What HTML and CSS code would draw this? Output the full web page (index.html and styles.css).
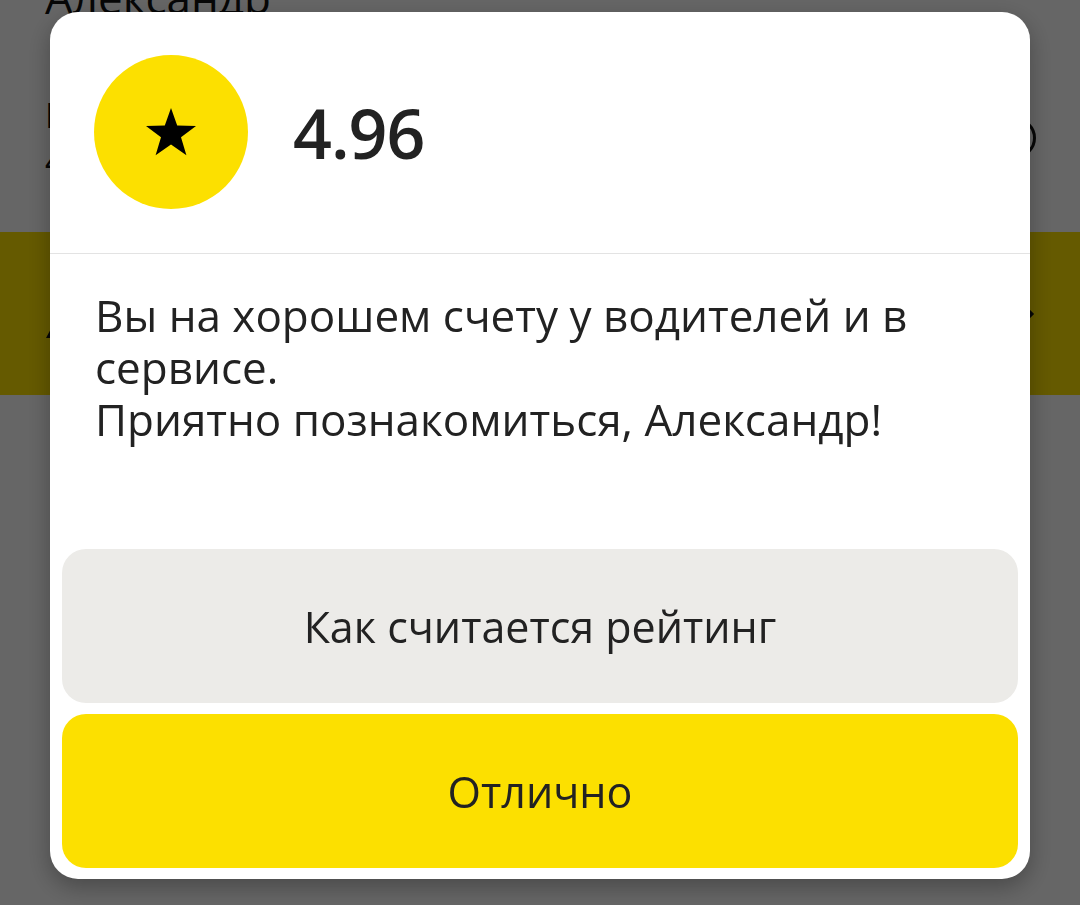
FILE: index.html
```html
<!DOCTYPE html>
<html lang="ru">
<head>
    <meta charset="UTF-8">
    <meta name="viewport" content="width=device-width, initial-scale=1.0">
    <title>Рейтинг</title>
    <link rel="stylesheet" href="styles.css">
</head>
<body>

    <div class="page">
        <h1 class="page-title">Александр</h1>
        <div class="rating-row">
            <div class="rating-info">
                <div class="rating-label">Р</div>
                <div class="rating-value">4</div>
            </div>
            <span class="info-icon"></span>
        </div>
        <div class="promo">
            <svg class="promo-icon" width="40" height="40" viewBox="0 0 40 40">
                <path d="M6 34 L20 8 L34 34 Z" fill="#111"/>
            </svg>
            <span class="promo-space"></span>
            <svg class="promo-arrow" width="24" height="24" viewBox="0 0 24 24">
                <path d="M8 4 L16 12 L8 20" fill="none" stroke="#111" stroke-width="3"/>
            </svg>
        </div>
    </div>

    <div class="overlay">
        <div class="modal">
            <div class="modal-head">
                <div class="star-circle">
                    <svg width="52" height="50" viewBox="0 0 52 50">
                        <polygon points="26,1 32.2,18.6 51,18.9 36,30.2 41.4,48.3 26,37.5 10.6,48.3 16,30.2 1,18.9 19.8,18.6" fill="#000"/>
                    </svg>
                </div>
                <div class="score">4.96</div>
            </div>
            <p class="modal-text">Вы на хорошем счету у водителей и в сервисе.<br>Приятно познакомиться, Александр!</p>
            <div class="modal-actions">
                <button class="btn btn-grey">Как считается рейтинг</button>
                <button class="btn btn-yellow">Отлично</button>
            </div>
        </div>
    </div>

</body>
</html>
```

FILE: styles.css
```css
body {
    font-family: "Open Sans", Arial, sans-serif;
    margin: 0;
    background: #fff;
    color: #1f1f1f;
    height: 905px;
    overflow: hidden;
}
.page {
    margin-top: -29px;
}
.page-title {
    font-size: 44px;
    font-weight: 400;
    margin: 0;
    padding-left: 45px;
    line-height: 53px;
    color: #111;
}
.rating-row {
    display: flex;
    justify-content: space-between;
    align-items: center;
    padding: 20px 44px 0 45px;
    height: 208px;
    box-sizing: border-box;
}
.rating-label {
    font-size: 34px;
    color: #111;
}
.rating-value {
    font-size: 34px;
    color: #111;
}
.info-icon {
    width: 34px;
    height: 34px;
    border: 3px solid #111;
    border-radius: 50%;
}
.promo {
    background: #fce000;
    height: 163px;
    display: flex;
    align-items: center;
    padding: 20px 40px 0 40px;
    box-sizing: border-box;
    gap: 20px;
}
.promo-space {
    flex: 1;
}
.promo-arrow {
    margin-top: -20px;
}
.overlay {
    position: fixed;
    inset: 0;
    background: rgba(0, 0, 0, 0.6);
}
.modal {
    margin: 12px 0 0 50px;
    width: 980px;
    height: 867px;
    background: #fff;
    border-radius: 28px;
    box-shadow: 0 8px 24px rgba(0, 0, 0, 0.3);
    display: flex;
    flex-direction: column;
    overflow: hidden;
}
.modal-head {
    display: flex;
    align-items: center;
    gap: 45px;
    padding: 43px 44px 44px;
    border-bottom: 1px solid #e3e3e3;
}
.star-circle {
    width: 154px;
    height: 154px;
    border-radius: 50%;
    background: #fce000;
    display: flex;
    align-items: center;
    justify-content: center;
}
.score {
    font-size: 68px;
    font-weight: 600;
    color: #222;
    letter-spacing: -1px;
}
.modal-text {
    margin: 0;
    padding: 35px 100px 0 45px;
    font-size: 44px;
    line-height: 52px;
    color: #222;
}
.modal-actions {
    margin-top: auto;
    padding: 0 12px 11px;
    display: flex;
    flex-direction: column;
    gap: 11px;
}
.btn {
    height: 154px;
    border: none;
    border-radius: 24px;
    font-family: inherit;
    font-size: 43px;
    color: #222;
    cursor: pointer;
}
.btn-grey {
    background: #ecebe8;
}
.btn-yellow {
    background: #fce000;
}
```
